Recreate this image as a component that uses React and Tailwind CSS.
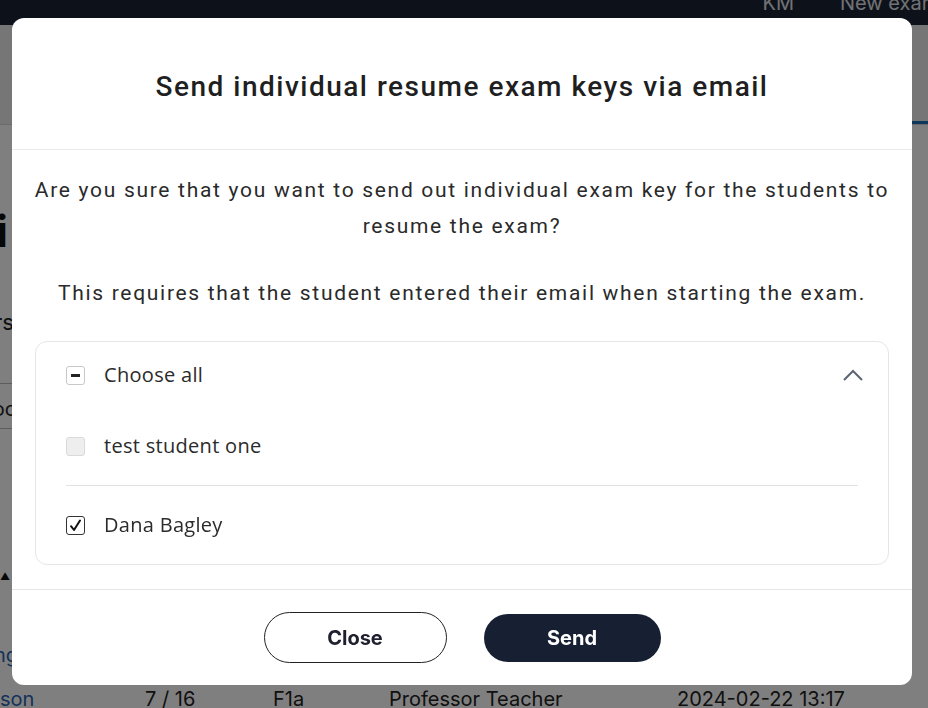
import React from 'react';

const students = [
    { name: 'test student one', checked: false, disabled: true },
    { name: 'Dana Bagley', checked: true, disabled: false },
];

const Checkbox = ({ state }) => {
    if (state === 'partial') {
        return (
            <span className="flex h-[19px] w-[19px] shrink-0 items-center justify-center rounded-[3px] border border-[#c9c9c9] bg-white">
                <span className="h-[3px] w-[9px] bg-[#222]"></span>
            </span>
        );
    }
    if (state === 'checked') {
        return (
            <span className="flex h-[19px] w-[19px] shrink-0 items-center justify-center rounded-[3px] border border-[#333] bg-white">
                <svg width="13" height="13" viewBox="0 0 13 13" fill="none">
                    <path d="M2 7.2 L5 11 L11 1.5" stroke="#111" strokeWidth="2" strokeLinecap="round" strokeLinejoin="round" />
                </svg>
            </span>
        );
    }
    return <span className="h-[19px] w-[19px] shrink-0 rounded-[3px] border border-[#dadada] bg-[#eeeeee]"></span>;
};

const BackgroundPage = () => (
    <div className="h-[708px] w-[928px] overflow-hidden bg-white font-['Inter',sans-serif]">
        <div className="flex h-[25px] items-start justify-end gap-[46px] bg-[#1a2234] text-[20px] leading-none text-[#e2e5ea]">
            <span className="-mt-[7px]">KM</span>
            <span className="-mt-[7px] w-[88px] overflow-hidden whitespace-nowrap">New exam</span>
        </div>
        <div className="flex h-[100px] items-end justify-end border-b border-[#d4d4d4] bg-[#ececec]">
            <div className="h-[3px] w-[20px] bg-[#1d6fb8]"></div>
        </div>
        <div className="flex flex-col pt-[84px]">
            <div className="-ml-[4px] text-[44px] font-bold leading-none text-[#111]">i</div>
            <div className="mt-[58px] -ml-[6px] text-[22px] leading-none text-[#222]">rs</div>
            <div className="mt-[50px] h-[46px] w-[60px] border-y border-[#bbb] pt-[10px] -ml-[12px] text-[20px] text-[#222]">loo</div>
            <div className="mt-[142px] text-[10px] leading-none text-[#111]">▲</div>
            <div className="mt-[64px] -ml-[6px] text-[20px] leading-none text-[#2b64b1]">ng</div>
            <div className="mt-[24px] grid grid-cols-[145px_128px_116px_288px_auto] text-[20px] leading-none text-[#222]">
                <span className="text-[#2b64b1]">son</span>
                <span>7 / 16</span>
                <span>F1a</span>
                <span>Professor Teacher</span>
                <span>2024-02-22 13:17</span>
            </div>
        </div>
    </div>
);

const App = () => {
    return (
        <div className="relative h-[708px] w-[928px] overflow-hidden">
            <BackgroundPage />
            <div className="fixed inset-0 bg-black/50"></div>
            <div className="fixed left-[12px] top-[18px] flex w-[900px] flex-col rounded-[12px] bg-white font-['Roboto',sans-serif]">
                <div className="flex h-[132px] items-center justify-center border-b border-[#ececec] pt-[6px]">
                    <h2 className="text-[28px] font-medium tracking-[1.5px] text-[#1f1f1f]">
                        Send individual resume exam keys via email
                    </h2>
                </div>
                <div className="flex flex-col px-[22px] pt-[22px] pb-[24px]">
                    <p className="text-center text-[21px] leading-[36px] tracking-[1.7px] text-[#2a2a2a]">
                        Are you sure that you want to send out individual exam key for the students to resume the exam?
                    </p>
                    <p className="mt-[31px] text-center text-[21px] leading-[36px] tracking-[1.7px] text-[#2a2a2a]">
                        This requires that the student entered their email when starting the exam.
                    </p>
                    <div className="mx-[1px] mt-[30px] rounded-[12px] border border-[#e6e6e6] px-[30px] pt-[13px] font-['Open_Sans',sans-serif] text-[20px] tracking-[0.3px] text-[#2b2b2b]">
                        <div className="flex h-[40px] items-center">
                            <Checkbox state="partial" />
                            <span className="ml-[19px]">Choose all</span>
                            <svg className="ml-auto mr-[-6px]" width="22" height="14" viewBox="0 0 22 14" fill="none">
                                <path d="M2 12 L11 3 L20 12" stroke="#5b6573" strokeWidth="2" />
                            </svg>
                        </div>
                        <div className="mt-[12px]">
                            {students.map((s, i) => (
                                <div
                                    key={s.name}
                                    className={`flex items-center py-[19px] ${i < students.length - 1 ? 'border-b border-[#e2e2e2]' : ''}`}
                                >
                                    <div className="flex h-[40px] items-center">
                                        <Checkbox state={s.checked ? 'checked' : 'empty'} />
                                        <span className="ml-[19px]">{s.name}</span>
                                    </div>
                                </div>
                            ))}
                        </div>
                    </div>
                </div>
                <div className="flex h-[96px] items-center justify-center gap-[37px] border-t border-[#e6e6e6] font-['Inter',sans-serif]">
                    <button className="h-[51px] w-[183px] rounded-full border border-[#222] bg-white text-[20px] font-bold text-[#1e2030]">
                        Close
                    </button>
                    <button className="h-[48px] w-[177px] rounded-full bg-[#172033] text-[20px] font-bold text-white">
                        Send
                    </button>
                </div>
            </div>
        </div>
    );
};

export default App;
